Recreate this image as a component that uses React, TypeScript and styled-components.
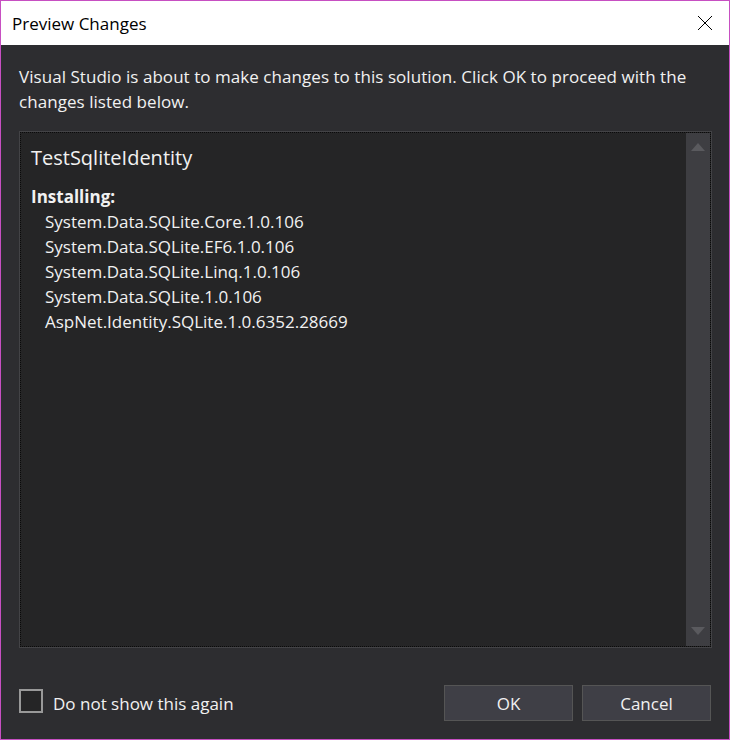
import React from "react";
import styled, { createGlobalStyle } from "styled-components";

const Global = createGlobalStyle`
  html, body { margin: 0; padding: 0; background: #2d2d30; }
  * { box-sizing: border-box; }
`;

const FONT = `"Open Sans", "Noto Sans", "Liberation Sans", sans-serif`;

const Window = styled.div`
  width: 730px;
  height: 740px;
  border: 1px solid #c74fc2;
  background: #2d2d30;
  display: flex;
  flex-direction: column;
  font-family: ${FONT};
`;

const TitleBar = styled.div`
  height: 44px;
  flex: none;
  background: #ffffff;
  display: flex;
  align-items: center;
  justify-content: space-between;
  padding: 0 15px 0 11px;
`;

const Title = styled.div`
  font-size: 17px;
  color: #000;
`;

const CloseBtn = styled.div`
  width: 18px;
  height: 18px;
  display: flex;
  align-items: center;
  justify-content: center;
`;

const Body = styled.div`
  flex: 1;
  display: flex;
  flex-direction: column;
  padding: 19px 17px 17px 18px;
  min-height: 0;
`;

const Description = styled.p`
  margin: 0;
  color: #f1f1f1;
  font-size: 17px;
  line-height: 25px;
  letter-spacing: 0.05px;
`;

const Panel = styled.div`
  margin-top: 17px;
  height: 517px;
  border: 1px solid #434346;
  background: #252526;
  display: flex;
`;

const Focus = styled.div`
  flex: 1;
  display: flex;
  border: 1px dotted #0a0a0a;
  min-width: 0;
`;

const Content = styled.div`
  flex: 1;
  padding: 11px 10px;
  color: #f1f1f1;
`;

const ProjectName = styled.div`
  font-size: 20px;
  line-height: 28px;
  margin-bottom: 12px;
`;

const Section = styled.div`
  font-size: 17px;
  font-weight: 700;
  line-height: 25px;
`;

const Item = styled.div`
  font-size: 17px;
  line-height: 25px;
  padding-left: 14px;
`;

const Scrollbar = styled.div`
  width: 24px;
  background: #3e3e42;
  display: flex;
  flex-direction: column;
  justify-content: space-between;
  align-items: center;
  padding: 10px 0 11px;
`;

const Footer = styled.div`
  display: flex;
  align-items: center;
  justify-content: space-between;
  margin-top: 37px;
`;

const CheckLabel = styled.label`
  display: flex;
  align-items: center;
  gap: 10px;
  color: #f1f1f1;
  font-size: 17px;
  margin-bottom: 5px;
`;

const CheckText = styled.span`
  padding-top: 6px;
`;

const Box = styled.span`
  width: 24px;
  height: 24px;
  border: 2px solid #999999;
  background: #252526;
  display: inline-block;
`;

const Buttons = styled.div`
  display: flex;
  gap: 9px;
  margin-right: 1px;
`;

const Button = styled.button`
  width: 129px;
  height: 36px;
  background: #3f3f46;
  border: 1px solid #555555;
  color: #f1f1f1;
  font-family: ${FONT};
  font-size: 17px;
  padding: 0;
`;

const Arrow = ({ up }: { up?: boolean }) => (
  <svg width="14" height="8" viewBox="0 0 14 8">
    <polygon points={up ? "7,0 14,8 0,8" : "0,0 14,0 7,8"} fill="#5a5a5e" />
  </svg>
);

const items = [
  "System.Data.SQLite.Core.1.0.106",
  "System.Data.SQLite.EF6.1.0.106",
  "System.Data.SQLite.Linq.1.0.106",
  "System.Data.SQLite.1.0.106",
  "AspNet.Identity.SQLite.1.0.6352.28669",
];

export default function App() {
  return (
    <>
      <Global />
      <Window>
        <TitleBar>
          <Title>Preview Changes</Title>
          <CloseBtn>
            <svg width="16" height="16" viewBox="0 0 16 16">
              <path d="M1 1 L15 15 M15 1 L1 15" stroke="#000" strokeWidth="1" />
            </svg>
          </CloseBtn>
        </TitleBar>
        <Body>
          <Description>
            Visual Studio is about to make changes to this solution. Click OK to proceed with the changes listed below.
          </Description>
          <Panel>
            <Focus>
              <Content>
                <ProjectName>TestSqliteIdentity</ProjectName>
                <Section>Installing:</Section>
                {items.map((i) => (
                  <Item key={i}>{i}</Item>
                ))}
              </Content>
              <Scrollbar>
                <Arrow up />
                <Arrow />
              </Scrollbar>
            </Focus>
          </Panel>
          <Footer>
            <CheckLabel>
              <Box />
              <CheckText>Do not show this again</CheckText>
            </CheckLabel>
            <Buttons>
              <Button>OK</Button>
              <Button>Cancel</Button>
            </Buttons>
          </Footer>
        </Body>
      </Window>
    </>
  );
}
